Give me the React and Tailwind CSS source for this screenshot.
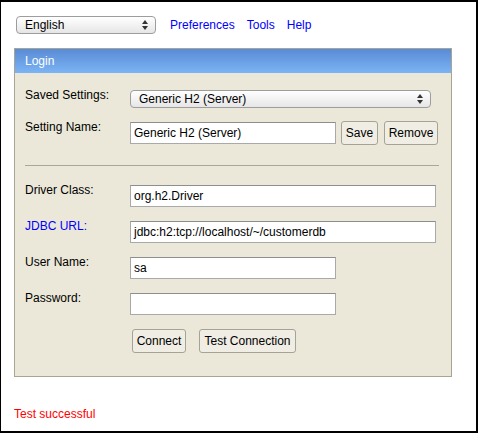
import React from "react";

function SelectBox({ value, className }) {
  return (
    <div
      className={`flex items-center justify-between rounded-[4px] border border-[#9d9d9d] bg-gradient-to-b from-white to-[#e6e6e6] pl-[8px] pr-[7px] text-[12px] leading-none text-black ${className}`}
    >
      <span>{value}</span>
      <svg width="6" height="10" viewBox="0 0 6 10">
        <path d="M0 4 L3 0 L6 4 Z" fill="#333" />
        <path d="M0 6 L3 10 L6 6 Z" fill="#333" />
      </svg>
    </div>
  );
}

function TextBox({ value, className }) {
  return (
    <div
      className={`flex h-[22px] items-center border border-[#a9a9a9] border-t-[#8e8e8e] bg-white pl-[3px] text-[12px] text-black ${className}`}
    >
      {value}
    </div>
  );
}

function Btn({ children, className }) {
  return (
    <div
      className={`flex h-[24px] items-center justify-center rounded-[3px] border border-[#a6a394] bg-[#efede4] text-[12px] text-black ${className}`}
    >
      {children}
    </div>
  );
}

function Row({ label, blue, children, className }) {
  return (
    <div className={`flex items-start ${className}`}>
      <div
        className={`-mt-[2px] w-[115px] shrink-0 pl-[10px] leading-[14px] ${blue ? "text-[#0000ff]" : "text-black"}`}
      >
        {label}
      </div>
      {children}
    </div>
  );
}

export default function App() {
  return (
    <div className="h-[433px] w-[478px] border-t-2 border-r-2 border-b-2 border-l border-black bg-white font-['Liberation_Sans',Arial,sans-serif] text-[12px]">
      <div className="flex items-center pl-[15px] pt-[14px]">
        <SelectBox value="English" className="h-[18px] w-[140px]" />
        <div className="ml-[14px] flex gap-[12px] text-[#0000ff]">
          <span>Preferences</span>
          <span>Tools</span>
          <span>Help</span>
        </div>
      </div>

      <div className="ml-[13px] mt-[14px] w-[438px] border border-[#a9a593] bg-[#ebe8d9]">
        <div className="flex h-[24px] items-center bg-gradient-to-b from-[#5a8bd5] to-[#7bb4f4] pl-[10px] text-white">
          Login
        </div>
        <div className="pb-[23px] pt-[17px]">
          <Row label="Saved Settings:">
            <SelectBox value="Generic H2 (Server)" className="h-[18px] w-[301px]" />
          </Row>
          <Row label="Setting Name:" className="mt-[14px]">
            <TextBox value="Generic H2 (Server)" className="w-[206px]" />
            <Btn className="ml-[5px] -mt-[1px] w-[37px]">Save</Btn>
            <Btn className="ml-[6px] -mt-[1px] w-[54px]">Remove</Btn>
          </Row>
          <div className="ml-[10px] mt-[20px] h-px w-[414px] bg-[#a9a69a]" />
          <Row label="Driver Class:" className="mt-[19px]">
            <TextBox value="org.h2.Driver" className="w-[306px]" />
          </Row>
          <Row label="JDBC URL:" blue className="mt-[14px]">
            <TextBox value="jdbc:h2:tcp://localhost/~/customerdb" className="w-[306px]" />
          </Row>
          <Row label="User Name:" className="mt-[14px]">
            <TextBox value="sa" className="w-[206px]" />
          </Row>
          <Row label="Password:" className="mt-[14px]">
            <TextBox value="" className="w-[206px]" />
          </Row>
          <div className="ml-[117px] mt-[14px] flex gap-[13px]">
            <Btn className="w-[54px]">Connect</Btn>
            <Btn className="w-[97px]">Test Connection</Btn>
          </div>
        </div>
      </div>

      <div className="ml-[13px] mt-[28px] text-[#ff0000]">Test successful</div>
    </div>
  );
}
